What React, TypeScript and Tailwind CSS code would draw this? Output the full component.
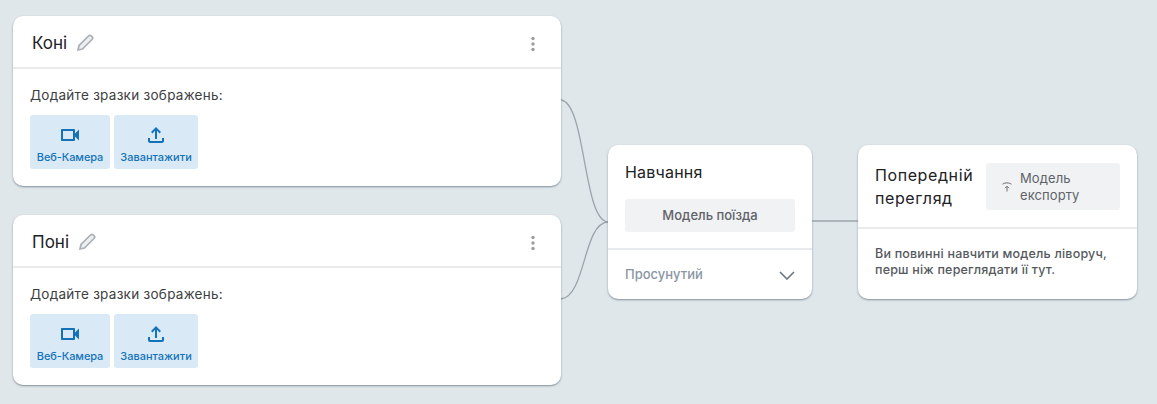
const cardShadow = "shadow-[0_1px_2px_0_rgba(80,95,110,0.65)]";

const VideoIcon = () => (
  <svg width="24" height="24" viewBox="0 0 24 24" fill="currentColor">
    <path d="M15 8v8H5V8h10m1-2H4c-.55 0-1 .45-1 1v10c0 .55.45 1 1 1h12c.55 0 1-.45 1-1v-3.5l4 4v-11l-4 4V7c0-.55-.45-1-1-1z" />
  </svg>
);

const UploadIcon = () => (
  <svg width="24" height="24" viewBox="0 0 24 24" fill="currentColor">
    <path d="M18 15v3H6v-3H4v3c0 1.1.9 2 2 2h12c1.1 0 2-.9 2-2v-3h-2zM7 9l1.41 1.41L11 7.83V16h2V7.83l2.59 2.58L17 9l-5-5-5 5z" />
  </svg>
);

const PencilIcon = () => (
  <svg width="18" height="18" viewBox="0 0 18 18" fill="#eceef0" stroke="#a9b0b6" strokeWidth="1.7" className="ml-[9px] -mt-[3px]">
    <path d="M2 16L3 11.5L12.5 2C13.3 1.2 14.5 1.2 15.3 2L16 2.7C16.8 3.5 16.8 4.7 16 5.5L6.5 15Z" />
  </svg>
);

const DotsIcon = () => (
  <svg width="6" height="16" viewBox="0 0 6 16" fill="#989ea3" className="ml-auto">
    <circle cx="3" cy="2.5" r="1.7" />
    <circle cx="3" cy="8" r="1.7" />
    <circle cx="3" cy="13.5" r="1.7" />
  </svg>
);

const ClassCard = ({ title }: { title: string }) => {
  return (
    <div className={`h-[170px] w-[548px] rounded-[10px] bg-white ${cardShadow}`}>
      <div className="flex h-[53px] items-center border-b-2 border-[#e8eaed] pl-[19px] pr-[25px] pt-[5px]">
        <span className="text-[17px] text-[#202124]">{title}</span>
        <PencilIcon />
        <DotsIcon />
      </div>
      <div className="pl-[17px] pt-[17px]">
        <p className="text-[13.5px] leading-[18px] tracking-[0.28px] text-[#3c4043]">Додайте зразки зображень:</p>
        <div className="mt-[11px] flex gap-[4px]">
          <button className="flex h-[54px] w-[80px] flex-col items-center rounded-[3px] bg-[#d9eaf6] pt-[8px] text-[#1473b8]">
            <VideoIcon />
            <span className="mt-[2px] text-[11px] font-medium leading-[16px] tracking-[-0.1px]">Веб-Камера</span>
          </button>
          <button className="flex h-[54px] w-[84px] flex-col items-center rounded-[3px] bg-[#d9eaf6] pt-[8px] text-[#1473b8]">
            <UploadIcon />
            <span className="mt-[2px] text-[11px] font-medium leading-[16px]">Завантажити</span>
          </button>
        </div>
      </div>
    </div>
  );
};

const App = () => {
  return (
    <div className="relative h-[404px] w-[1157px] overflow-hidden bg-[#e0e7eb] pl-[13px] pt-[16px] font-['Inter',sans-serif]">
      <svg className="absolute left-0 top-0" width="1157" height="404" fill="none" stroke="#9aa5ad" strokeWidth="1.3">
        <path d="M561 100C586 103 583 221 608 222" />
        <path d="M561 299C586 296 583 223 608 222" />
        <path d="M812 221H858" />
      </svg>

      <div className="relative flex">
        <div className="flex flex-col gap-[29px]">
          <ClassCard title="Коні" />
          <ClassCard title="Поні" />
        </div>

        <div className={`ml-[47px] mt-[129px] h-[154px] w-[204px] rounded-[10px] bg-white ${cardShadow}`}>
          <div className="h-[105px] border-b-2 border-[#e8eaed] px-[17px] pt-[16px]">
            <p className="text-[16px] leading-[22px] tracking-[0.2px] text-[#202124]">Навчання</p>
            <button className="mt-[16px] h-[33px] w-full rounded-[3px] bg-[#f0f2f4] text-[13px] font-medium text-[#5f6368]">
              Модель поїзда
            </button>
          </div>
          <div className="flex h-[47px] items-center justify-between pb-[0px] pl-[17px] pr-[17px] pt-[3px]">
            <span className="text-[13px] font-medium text-[#8a96a3]">Просунутий</span>
            <svg width="16" height="9" viewBox="0 0 16 9" fill="none" stroke="#6b7680" strokeWidth="1.6">
              <path d="M1 1L8 8L15 1" />
            </svg>
          </div>
        </div>

        <div className={`ml-[46px] mt-[129px] h-[154px] w-[279px] rounded-[10px] bg-white ${cardShadow}`}>
          <div className="flex h-[84px] items-start justify-between border-b-2 border-[#e8eaed] pl-[17px] pr-[17px] pt-[18px]">
            <p className="pt-[1px] text-[16px] leading-[23px] tracking-[0.6px] text-[#202124]">
              Попередній
              <br />
              перегляд
            </p>
            <button className="flex h-[47px] w-[134px] items-center rounded-[3px] bg-[#f0f2f4] pl-[16px] text-left text-[#5f6368]">
              <svg width="10" height="10" viewBox="0 0 10 10" fill="none" stroke="currentColor" strokeWidth="0.9" className="shrink-0">
                <path d="M0.5 2.2C3.2 0.4 6.8 0.4 9.5 2.2" />
                <path d="M5 9.5V4.5M3 6.2L5 4.2L7 6.2" />
              </svg>
              <span className="ml-[8px] text-[13px] leading-[17px] tracking-[0.1px]">
                Модель
                <br />
                експорту
              </span>
            </button>
          </div>
          <p className="pl-[17px] pt-[17px] text-[12.5px] font-medium leading-[16px] tracking-[0.2px] text-[#55595d]">
            Ви повинні навчити модель ліворуч,
            <br />
            перш ніж переглядати її тут.
          </p>
        </div>
      </div>
    </div>
  );
};

export default App;
